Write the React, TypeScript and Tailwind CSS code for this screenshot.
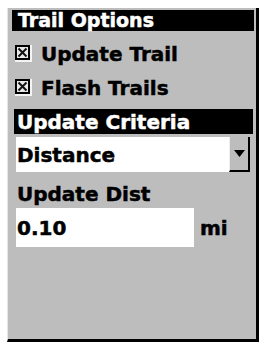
const font = { fontFamily: '"DejaVu Sans", Verdana, sans-serif' };

function CheckBox() {
  return (
    <svg width="17" height="17" viewBox="0 0 17 17" className="shrink-0">
      <rect x="0" y="0" width="17" height="17" fill="#f4f4f4" />
      <rect x="0" y="0" width="15" height="15" fill="#bdbdbd" />
      <rect x="1" y="1" width="13" height="13" fill="#e8e8e8" stroke="#000" strokeWidth="2" />
      <path d="M3.5 3.5 L11.5 11.5 M11.5 3.5 L3.5 11.5" stroke="#111" strokeWidth="2" />
    </svg>
  );
}

function Row({ label }: { label: string }) {
  return (
    <div className="flex items-center h-[23px] pl-[7px] gap-[9px]">
      <CheckBox />
      <span className="text-[20px] font-bold text-black leading-none [-webkit-text-stroke:0.5px_black]">{label}</span>
    </div>
  );
}

export default function App() {
  return (
    <div className="w-[262px] h-[343px] bg-white pt-[8px] pl-[7px] overflow-hidden" style={font}>
      <div className="w-[252px] h-[334px] bg-[#bdbdbd] border-l border-l-[#e6e6e6] border-r-[3px] border-b-[3px] border-black flex flex-col">
        <div className="mt-[2px] ml-[4px] w-[242px] h-[21px] bg-black flex items-center pl-[6px]">
          <span className="text-[19px] font-bold text-white leading-none [-webkit-text-stroke:0.5px_white]">Trail Options</span>
        </div>

        <div className="mt-[11px]">
          <Row label="Update Trail" />
        </div>
        <div className="mt-[11px]">
          <Row label="Flash Trails" />
        </div>

        <div className="mt-[10px] ml-[6px] w-[239px] h-[25px] bg-black flex items-center pl-[3px]">
          <span className="text-[20px] font-bold text-white leading-none [-webkit-text-stroke:0.5px_white]">Update Criteria</span>
        </div>

        <div className="mt-[3px] ml-[8px] w-[234px] h-[35px] bg-white flex items-center">
          <span className="flex-1 pl-[1px] text-[20px] font-bold text-black leading-none [-webkit-text-stroke:0.5px_black]">Distance</span>
          <div className="w-[21px] h-[35px] bg-[#bdbdbd] border-l border-l-[#eeeeee] border-r-[2px] border-b-[2px] border-black flex items-center justify-center">
            <svg width="11" height="7" viewBox="0 0 11 7">
              <path d="M0 0 H11 L5.5 7 Z" fill="#000" />
            </svg>
          </div>
        </div>

        <div className="mt-[10px] ml-[9px] h-[23px] flex items-center">
          <span className="text-[20px] font-bold text-black leading-none [-webkit-text-stroke:0.5px_black]">Update Dist</span>
        </div>

        <div className="mt-[3px] ml-[8px] flex items-center">
          <div className="w-[178px] h-[39px] bg-white flex items-center pl-[1px]">
            <span className="text-[20px] font-bold text-black leading-none [-webkit-text-stroke:0.5px_black]">0.10</span>
          </div>
          <span className="ml-[6px] text-[20px] font-bold text-black leading-none [-webkit-text-stroke:0.5px_black]">mi</span>
        </div>
      </div>
    </div>
  );
}
